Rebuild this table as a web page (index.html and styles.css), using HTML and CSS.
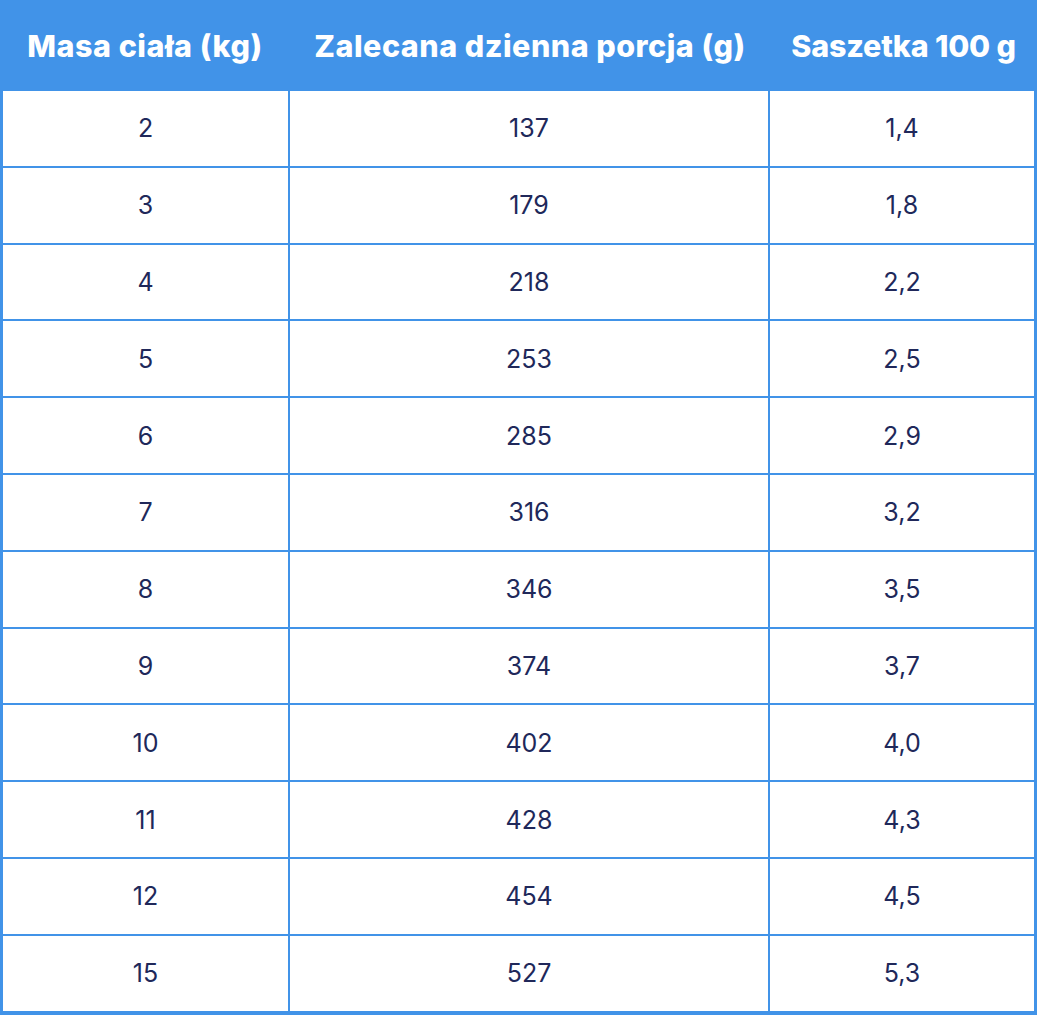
FILE: index.html
```html
<!DOCTYPE html>
<html lang="pl">
<head>
<meta charset="utf-8">
<title>Tabela dawkowania</title>
<link rel="stylesheet" href="styles.css">
</head>
<body>
<table class="dose-table">
  <thead>
    <tr>
      <th class="col-mass">Masa ciała (kg)</th>
      <th class="col-portion">Zalecana dzienna porcja (g)</th>
      <th class="col-sachet">Saszetka 100 g</th>
    </tr>
  </thead>
  <tbody>
    <tr><td>2</td><td>137</td><td>1,4</td></tr>
    <tr><td>3</td><td>179</td><td>1,8</td></tr>
    <tr><td>4</td><td>218</td><td>2,2</td></tr>
    <tr><td>5</td><td>253</td><td>2,5</td></tr>
    <tr><td>6</td><td>285</td><td>2,9</td></tr>
    <tr><td>7</td><td>316</td><td>3,2</td></tr>
    <tr><td>8</td><td>346</td><td>3,5</td></tr>
    <tr><td>9</td><td>374</td><td>3,7</td></tr>
    <tr><td>10</td><td>402</td><td>4,0</td></tr>
    <tr><td>11</td><td>428</td><td>4,3</td></tr>
    <tr><td>12</td><td>454</td><td>4,5</td></tr>
    <tr><td>15</td><td>527</td><td>5,3</td></tr>
  </tbody>
</table>
</body>
</html>
```

FILE: styles.css
```css
html, body {
  margin: 0;
  padding: 0;
  background: #ffffff;
}

.dose-table {
  width: 1037px;
  border-collapse: separate;
  border-spacing: 0;
  table-layout: fixed;
  font-family: "Inter", "Liberation Sans", sans-serif;
}

.dose-table th {
  height: 91px;
  padding: 0;
  background: #4193e8;
  color: #ffffff;
  font-size: 30.5px;
  font-weight: 800;
  letter-spacing: 0.5px;
  text-align: center;
  vertical-align: middle;
  white-space: nowrap;
}

.col-mass { width: 290px; }
.col-portion { width: 480px; }
.col-sachet {
  width: 267px;
  letter-spacing: -0.2px;
}

.dose-table th.col-sachet {
  letter-spacing: -0.2px;
}

.dose-table td {
  height: 74.8px;
  padding: 0;
  box-sizing: content-box;
  text-align: center;
  vertical-align: middle;
  color: #20285a;
  font-size: 25px;
  font-weight: 400;
  border-bottom: 2px solid #4193e8;
  border-right: 2px solid #4193e8;
}

.dose-table td:first-child {
  border-left: 3px solid #4193e8;
}

.dose-table td:last-child {
  border-right: 3px solid #4193e8;
}

.dose-table tbody tr:last-child td {
  border-bottom-width: 4px;
}
```
